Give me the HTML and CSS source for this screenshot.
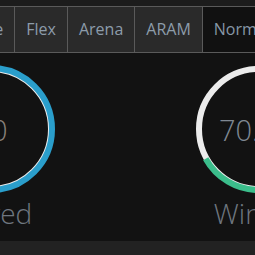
FILE: index.html
```html
<!DOCTYPE html>
<html lang="en">
<head>
    <meta charset="UTF-8">
    <meta name="viewport" content="width=device-width, initial-scale=1.0">
    <title>Match Stats</title>
    <link rel="stylesheet" href="styles.css">
</head>
<body>
    <div class="topbar"></div>
    <div class="tabs">
        <div class="tab first">Solo Queue</div>
        <div class="tab">Flex</div>
        <div class="tab">Arena</div>
        <div class="tab">ARAM</div>
        <div class="tab active">Normal</div>
    </div>

    <div class="stats">
        <div class="stat">
            <div class="ring">
                <svg viewBox="0 0 128 128" width="128" height="128">
                    <circle class="track" cx="64" cy="64" r="60"></circle>
                    <circle class="bar blue" cx="64" cy="64" r="61"></circle>
                </svg>
                <span class="value played">20</span>
            </div>
            <div class="label">Played</div>
        </div>
        <div class="stat">
            <div class="ring">
                <svg viewBox="0 0 128 128" width="128" height="128">
                    <circle class="track" cx="64" cy="64" r="60"></circle>
                    <circle class="bar green" cx="64" cy="64" r="61"
                        stroke-dasharray="256 400" transform="rotate(-90 64 64)"></circle>
                </svg>
                <span class="value">70.5%</span>
            </div>
            <div class="label win">Winrate</div>
        </div>
    </div>

    <div class="footer"></div>
</body>
</html>
```

FILE: styles.css
```css
html, body {
    margin: 0;
    padding: 0;
    background: #121212;
    overflow: hidden;
    font-family: "Open Sans", "DejaVu Sans", sans-serif;
}
.topbar {
    height: 6px;
    background: #1c1c1c;
}
.tabs {
    display: flex;
    margin-left: -95px;
    white-space: nowrap;
}
.tab {
    line-height: 45px;
    padding: 0 11px;
    font-size: 16px;
    color: #8d9caa;
    background: #2a2a2a;
    border: 1px solid #5a5a5a;
    margin-left: -1px;
}
.tab.first {
    margin-left: 0;
}
.tab.active {
    background: #111111;
    color: #8797a6;
    border-right: none;
    flex: 1;
}
.stats {
    display: flex;
    gap: 140px;
    margin-left: -73px;
    padding: 12px 0 9px;
}
.stat {
    width: 128px;
    flex-shrink: 0;
    display: flex;
    flex-direction: column;
    align-items: center;
}
.ring {
    display: grid;
    width: 128px;
    height: 128px;
    place-items: center;
}
.ring svg, .ring .value {
    grid-area: 1 / 1;
}
.track {
    fill: none;
    stroke: #ececec;
    stroke-width: 6;
}
.bar {
    fill: none;
    stroke-width: 6;
}
.bar.blue {
    stroke: #2a9ecb;
}
.bar.green {
    stroke: #3bbd8b;
}
.value {
    font-size: 29px;
    font-weight: 300;
    color: #7f8893;
}
.value.played {
    color: #8a817a;
}
.label {
    margin-top: 1px;
    font-size: 28px;
    font-weight: 300;
    line-height: 38px;
    color: #6f7780;
    white-space: nowrap;
}
.label.win {
    padding-left: 8px;
}
.footer {
    height: 20px;
    background: #222222;
}
```
